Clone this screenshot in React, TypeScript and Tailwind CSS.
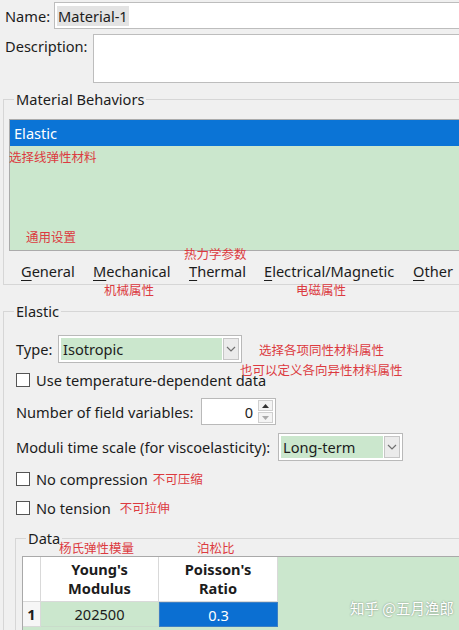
import type { ReactNode } from "react";

const cjk = "font-['Noto_Sans_CJK_SC','Noto_Sans',sans-serif]";

function Note({ className, children }: { className: string; children: ReactNode }) {
  return (
    <span className={`absolute text-[12.5px] leading-[16px] whitespace-nowrap text-[#dc3a40] ${cjk} ${className}`}>
      {children}
    </span>
  );
}

function Chevron() {
  return (
    <svg width="10" height="6" viewBox="0 0 10 6">
      <path d="M1 1l4 4 4-4" fill="none" stroke="#707070" strokeWidth="1.2" />
    </svg>
  );
}

function Combo({ value, className }: { value: string; className: string }) {
  return (
    <div className={`flex h-[28px] border border-[#b9b9b9] bg-white p-[2px] ${className}`}>
      <div className="flex flex-1 items-center bg-[#cbe7cd] pl-[2px]">{value}</div>
      <div className="ml-[1px] flex w-[16px] items-center justify-center border border-[#c6c6c6] bg-[#ebebeb]">
        <Chevron />
      </div>
    </div>
  );
}

function Check({ label, note }: { label: string; note?: ReactNode }) {
  return (
    <div className="flex h-[20px] items-center">
      <span className="h-[14px] w-[14px] border border-[#555] bg-white" />
      <span className="ml-[6px]">{label}</span>
      {note}
    </div>
  );
}

function MenuItem({ first, rest, className }: { first: string; rest: string; className: string }) {
  return (
    <span className={className}>
      <span className="underline underline-offset-[3px]">{first}</span>
      {rest}
    </span>
  );
}

export default function App() {
  return (
    <div className="relative h-[630px] w-[459px] overflow-hidden bg-[#f0f0f0] font-['Noto_Sans','Noto_Sans_CJK_SC',sans-serif] text-[14.6px] leading-[20px] text-[#1c1c1c]">
      <div className="flex flex-col pt-[2px]">
        {/* Name */}
        <div className="flex h-[27px] items-center">
          <span className="w-[54px] pl-[5px]">Name:</span>
          <div className="mr-[-20px] flex h-full flex-1 items-center border border-[#bdbdbd] bg-white pl-[2px]">
            <span className="bg-[#e3e3e3] px-[1px]">Material-1</span>
          </div>
        </div>

        {/* Description */}
        <div className="mt-[5px] flex h-[49px]">
          <span className="mt-[2px] w-[93px] pl-[5px]">Description:</span>
          <div className="mr-[-20px] flex-1 border border-[#bdbdbd] bg-white" />
        </div>

        {/* Material Behaviors */}
        <fieldset className="mt-[6px] ml-[3px] mr-[-20px] border border-[#d6d6d6] pb-[3px]">
          <legend className="ml-[10px] px-[2px] leading-[20px]">Material Behaviors</legend>
          <div className="pl-[5px] pt-[10px]">
            <div className="h-[132px] border border-[#ababab] bg-[#cbe7cd]">
              <div className="h-[26px] bg-[#0b74d6] pl-[4px] leading-[26px] text-white">Elastic</div>
            </div>
            <div className="mt-[10px] flex h-[20px] pl-[12px]">
              <MenuItem first="G" rest="eneral" className="w-[72px]" />
              <MenuItem first="M" rest="echanical" className="w-[96px]" />
              <MenuItem first="T" rest="hermal" className="w-[75px]" />
              <MenuItem first="E" rest="lectrical/Magnetic" className="w-[149px]" />
              <MenuItem first="O" rest="ther" className="" />
            </div>
          </div>
        </fieldset>

        {/* Elastic */}
        <fieldset className="mt-[16px] ml-[3px] mr-[-20px] border border-[#d6d6d6]">
          <legend className="ml-[10px] px-[2px] leading-[20px]">Elastic</legend>
          <div className="flex flex-col pl-[12px] pt-[14px]">
            <div className="flex h-[28px] items-center">
              <span className="w-[42px]">Type:</span>
              <Combo value="Isotropic" className="w-[184px]" />
            </div>

            <div className="mt-[7px]">
              <Check label="Use temperature-dependent data" />
            </div>

            <div className="mt-[8px] flex h-[27px] items-center">
              <span className="w-[185px]">Number of field variables:</span>
              <div className="flex h-full w-[75px] items-center border border-[#b9b9b9] bg-white">
                <span className="flex-1 pr-[5px] text-right">0</span>
                <div className="mr-[2px] flex h-[23px] w-[15px] flex-col gap-[1px]">
                  <div className="flex flex-1 items-center justify-center border border-[#cfcfcf] bg-[#f4f4f4]">
                    <svg width="7" height="4" viewBox="0 0 7 4">
                      <path d="M0 4L3.5 0 7 4z" fill="#333" />
                    </svg>
                  </div>
                  <div className="flex flex-1 items-center justify-center border border-[#cfcfcf] bg-[#f4f4f4]">
                    <svg width="7" height="4" viewBox="0 0 7 4">
                      <path d="M0 0L3.5 4 7 0z" fill="#aaa" />
                    </svg>
                  </div>
                </div>
              </div>
            </div>

            <div className="mt-[8px] flex h-[28px] items-center">
              <span className="w-[262px] whitespace-nowrap">Moduli time scale (for viscoelasticity):</span>
              <Combo value="Long-term" className="w-[125px]" />
            </div>

            <div className="mt-[8px]">
              <Check
                label="No compression"
                note={<span className={`ml-[5px] text-[12.5px] text-[#dc3a40] ${cjk}`}>不可压缩</span>}
              />
            </div>
            <div className="mt-[9px]">
              <Check
                label="No tension"
                note={<span className={`ml-[9px] text-[12.5px] text-[#dc3a40] ${cjk}`}>不可拉伸</span>}
              />
            </div>

            {/* Data table */}
            <fieldset className="mt-[10px] ml-[-1px] border border-[#d6d6d6]">
              <legend className="ml-[10px] px-[2px] leading-[20px]">Data</legend>
              <div className="pl-[6px] pt-[8px]">
                <div className="border-l border-t border-[#a9a9a9] bg-[#cbe7cd]">
                  <div className="flex h-[45px]">
                    <div className="w-[18px] border-r border-b border-[#d9d9d9] bg-white" />
                    <div className="flex w-[118px] flex-col items-center justify-center border-r border-b border-[#d9d9d9] bg-white font-bold leading-[19px]">
                      <span>Young's</span>
                      <span>Modulus</span>
                    </div>
                    <div className="flex w-[119px] flex-col items-center justify-center border-r border-b border-[#d9d9d9] bg-white font-bold leading-[19px]">
                      <span>Poisson's</span>
                      <span>Ratio</span>
                    </div>
                    <div className="flex-1" />
                  </div>
                  <div className="flex h-[25px]">
                    <div className="flex w-[18px] items-center justify-center border-r border-b border-[#d9d9d9] bg-[#f6f6f6] font-bold">
                      1
                    </div>
                    <div className="flex w-[118px] items-center justify-center border-r border-b border-[#c9dcca]">202500</div>
                    <div className="flex w-[119px] items-center justify-center border border-[#3c7fc4] bg-[#0b6fd2] text-white">
                      0.3
                    </div>
                    <div className="flex-1" />
                  </div>
                  <div className="h-[40px]" />
                </div>
              </div>
            </fieldset>
          </div>
        </fieldset>
      </div>

      <Note className="left-[9px] top-[149px]">选择线弹性材料</Note>
      <Note className="left-[26px] top-[229px]">通用设置</Note>
      <Note className="left-[184px] top-[246px]">热力学参数</Note>
      <Note className="left-[104px] top-[282px]">机械属性</Note>
      <Note className="left-[296px] top-[282px]">电磁属性</Note>
      <Note className="left-[259px] top-[342px]">选择各项同性材料属性</Note>
      <Note className="left-[240px] top-[362px]">也可以定义各向异性材料属性</Note>
      <Note className="left-[59px] top-[540px]">杨氏弹性模量</Note>
      <Note className="left-[197px] top-[540px]">泊松比</Note>

      <span
        className={`absolute left-[350px] top-[598px] whitespace-nowrap text-[14.5px] leading-[20px] text-white [text-shadow:0_0_2px_rgba(0,0,0,0.45)] ${cjk}`}
      >
        知乎 @五月渔郎
      </span>
    </div>
  );
}
